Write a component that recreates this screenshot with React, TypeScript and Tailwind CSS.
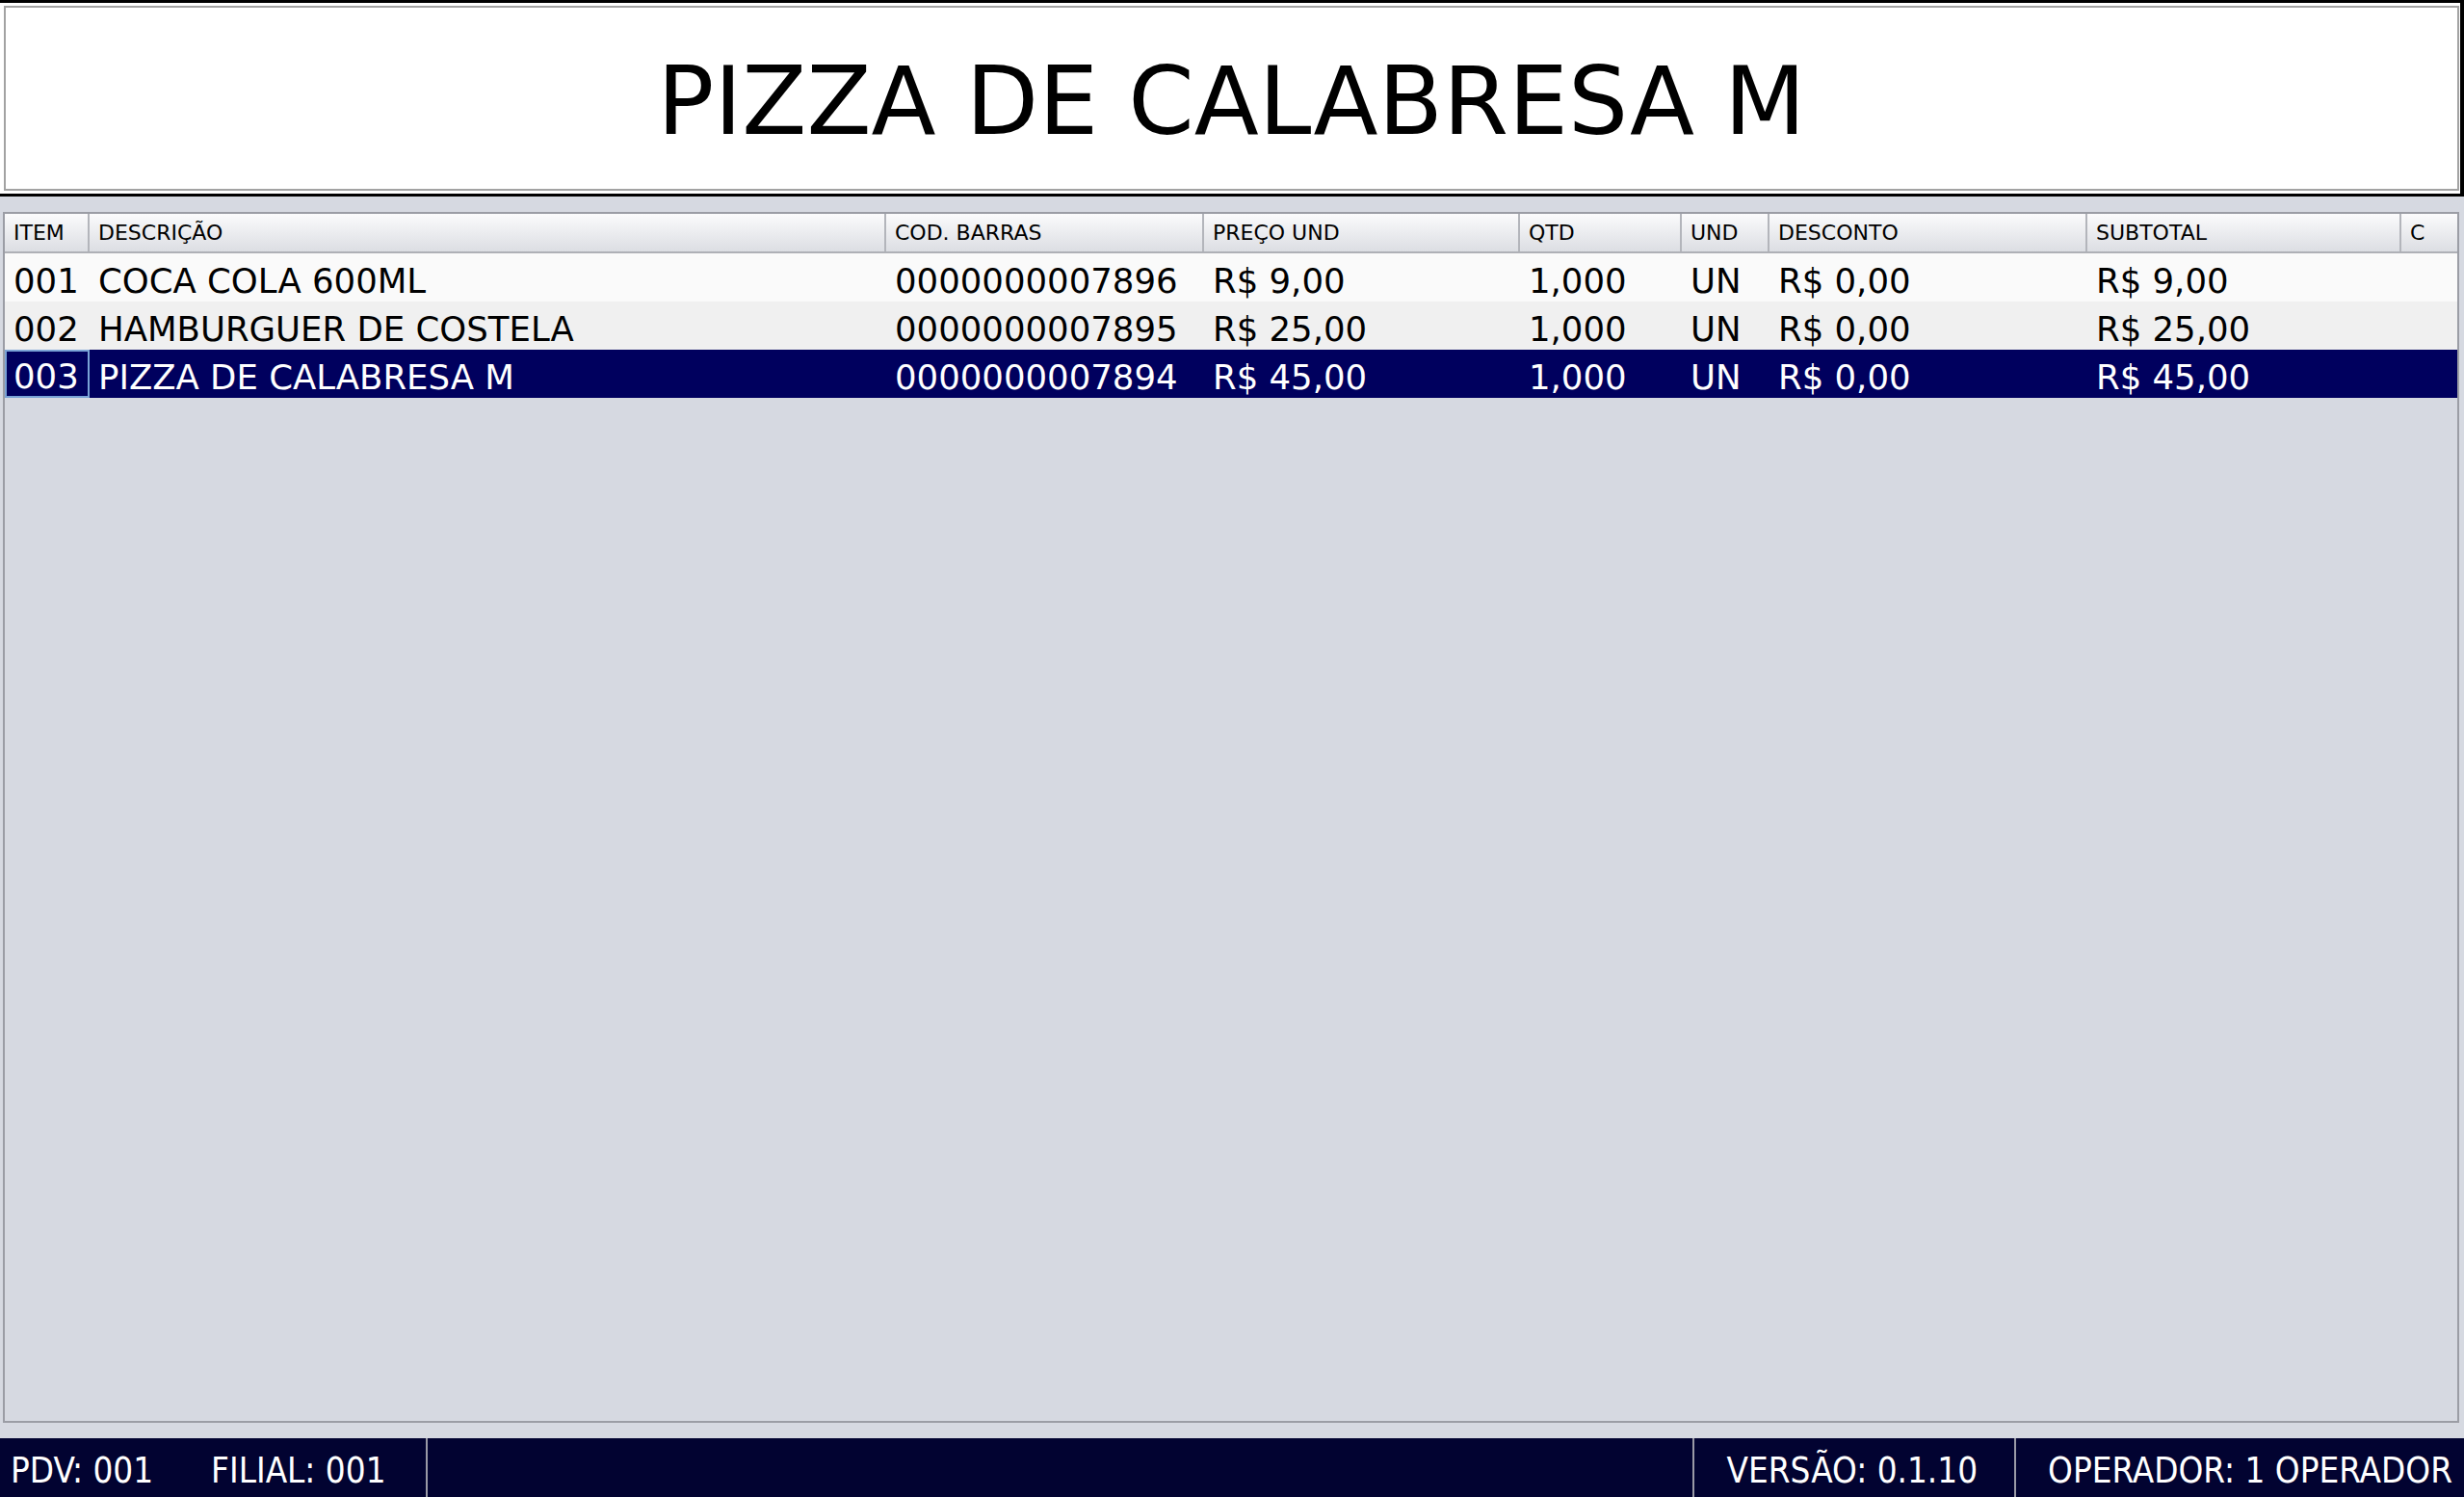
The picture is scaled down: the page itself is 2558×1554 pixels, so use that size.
import React from 'react';

interface Item {
  item: string;
  descricao: string;
  codBarras: string;
  preco: string;
  qtd: string;
  und: string;
  desconto: string;
  subtotal: string;
}

const items: Item[] = [
  { item: '001', descricao: 'COCA COLA 600ML', codBarras: '0000000007896', preco: 'R$ 9,00', qtd: '1,000', und: 'UN', desconto: 'R$ 0,00', subtotal: 'R$ 9,00' },
  { item: '002', descricao: 'HAMBURGUER DE COSTELA', codBarras: '0000000007895', preco: 'R$ 25,00', qtd: '1,000', und: 'UN', desconto: 'R$ 0,00', subtotal: 'R$ 25,00' },
  { item: '003', descricao: 'PIZZA DE CALABRESA M', codBarras: '0000000007894', preco: 'R$ 45,00', qtd: '1,000', und: 'UN', desconto: 'R$ 0,00', subtotal: 'R$ 45,00' },
];

const headers = ['ITEM', 'DESCRIÇÃO', 'COD. BARRAS', 'PREÇO UND', 'QTD', 'UND', 'DESCONTO', 'SUBTOTAL', 'C'];

const gridCols = 'grid grid-cols-[88px_827px_330px_328px_168px_91px_330px_326px_1fr]';

export default function App() {
  const selected = 2;

  return (
    <div className="flex h-[1554px] w-full flex-col bg-[#d6d9e1] font-['DejaVu_Sans',sans-serif] text-black">
      {/* produto atual */}
      <div className="h-[204px] border-t-[3px] border-r-[4px] border-b-[3px] border-black bg-white pt-[3px] pr-[1px] pb-[3px] pl-[4px]">
        <div className="flex h-full items-center justify-center border-2 border-[#a2a2a2] pt-[6px]">
          <span className="text-[98px] leading-none">PIZZA DE CALABRESA M</span>
        </div>
      </div>

      <div className="flex min-h-0 flex-1 flex-col pt-[16px] pr-[5px] pb-[16px] pl-[3px]">
        <div className="flex flex-1 flex-col border-2 border-[#9b9da5] bg-[#d6d9e1]">
          <div className={`${gridCols} h-[41px] border-b-2 border-[#aeb0b6] bg-gradient-to-b from-[#fbfbfc] to-[#dcdee3]`}>
            {headers.map((h, i) => (
              <div
                key={h}
                className={`flex items-center px-[9px] text-[22px] ${i < headers.length - 1 ? 'border-r-2 border-[#b3b5bb]' : ''}`}
              >
                {h}
              </div>
            ))}
          </div>

          {items.map((it, idx) => {
            const isSel = idx === selected;
            const rowBg = isSel ? 'bg-[#00005e] text-white' : idx % 2 === 0 ? 'bg-[#fafafa]' : 'bg-[#f0f0f0]';
            const cells = [it.item, it.descricao, it.codBarras, it.preco, it.qtd, it.und, it.desconto, it.subtotal, ''];
            return (
              <div key={it.item} className={`${gridCols} h-[50px] text-[35.5px] leading-none ${rowBg}`}>
                {cells.map((c, i) => (
                  <div
                    key={i}
                    className={`flex items-center whitespace-nowrap ${
                      isSel && i === 0 ? 'border-2 border-[#7aa3d6] px-[7px] pt-[5px]' : 'px-[9px] pt-[7px]'
                    }`}
                  >
                    {c}
                  </div>
                ))}
              </div>
            );
          })}
        </div>
      </div>

      {/* rodapé */}
      <div className="flex h-[61px] items-stretch bg-[#020331] font-['DejaVu_Sans_Condensed','DejaVu_Sans',sans-serif] text-[36.5px] leading-none text-white font-stretch-condensed">
        <div className="flex w-[444px] items-center gap-[60px] border-r-2 border-[#9a9aa6] pt-[7px] pl-[11px]">
          <span>PDV: 001</span>
          <span>FILIAL: 001</span>
        </div>
        <div className="flex-1 border-r-2 border-[#9a9aa6]" />
        <div className="flex items-center border-r-2 border-[#9a9aa6] pt-[7px] pr-[38px] pl-[34px]">VERSÃO: 0.1.10</div>
        <div className="flex items-center pt-[7px] pr-[12px] pl-[33px]">OPERADOR: 1 OPERADOR</div>
      </div>
    </div>
  );
}
